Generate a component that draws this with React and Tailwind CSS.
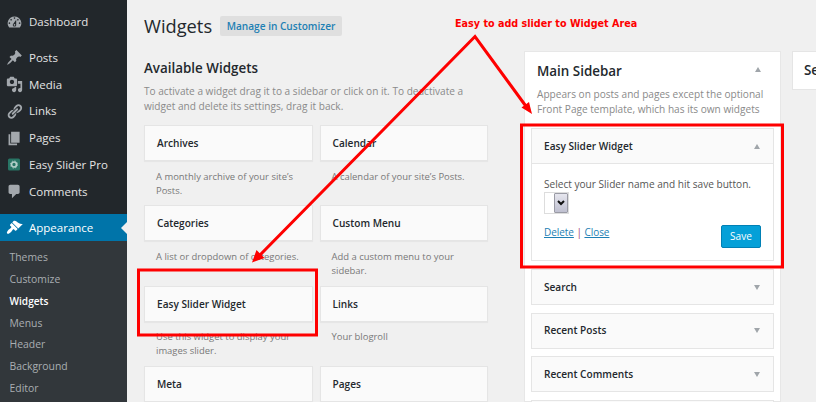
const icons = {
  dashboard:
    'M3.76 17h12.48A7.998 7.998 0 0 0 10 4a7.998 7.998 0 0 0-6.24 13zM10 5c.55 0 1 .45 1 1s-.45 1-1 1-1-.45-1-1 .45-1 1-1zM6 7c.55 0 1 .45 1 1s-.45 1-1 1-1-.45-1-1 .45-1 1-1zm8 0c.55 0 1 .45 1 1s-.45 1-1 1-1-.45-1-1 .45-1 1-1zm-5.37 5.55L12 8v6c0 1.1-.9 2-2 2s-2-.9-2-2c0-.57.24-1.08.63-1.45zM4 11c.55 0 1 .45 1 1s-.45 1-1 1-1-.45-1-1 .45-1 1-1zm12 0c.55 0 1 .45 1 1s-.45 1-1 1-1-.45-1-1 .45-1 1-1zm-5 3c0-.55-.45-1-1-1s-1 .45-1 1 .45 1 1 1 1-.45 1-1z',
  posts:
    'M10.44 3.02l1.82-1.82 6.36 6.35-1.83 1.82c-1.05-.68-2.48-.57-3.41.36l-.75.75c-.92.93-1.04 2.35-.35 3.41l-1.83 1.82-2.41-2.41-2.8 2.79c-.42.42-3.38 2.71-3.8 2.29s1.86-3.39 2.28-3.81l2.79-2.79L4.1 9.36l1.83-1.82c1.05.69 2.48.57 3.4-.36l.75-.75c.93-.92 1.05-2.35.36-3.41z',
  media:
    'M13 11V4c0-.55-.45-1-1-1h-1.67L9 1H5L3.67 3H2c-.55 0-1 .45-1 1v7c0 .55.45 1 1 1h10c.55 0 1-.45 1-1zM7 4.5c1.38 0 2.5 1.12 2.5 2.5S8.38 9.5 7 9.5 4.5 8.38 4.5 7 5.62 4.5 7 4.5zM14 6h5v10.5c0 1.38-1.12 2.5-2.5 2.5S14 17.88 14 16.5s1.12-2.5 2.5-2.5c.17 0 .34.02.5.05V9h-3V6zm-4 8.05V13h2v3.5c0 1.38-1.12 2.5-2.5 2.5S7 17.88 7 16.5 8.12 14 9.5 14c.17 0 .34.02.5.05z',
  links:
    'M17.74 2.76c1.68 1.69 1.68 4.41 0 6.1l-1.53 1.52c-1.12 1.12-2.7 1.47-4.14 1.09l2.62-2.61.76-.77.76-.76c.84-.84.84-2.2 0-3.04-.84-.85-2.2-.85-3.04 0l-.77.76-3.38 3.38c-.37-1.44-.02-3.02 1.1-4.14l1.52-1.53c1.69-1.68 4.42-1.68 6.1 0zM8.59 13.43l5.34-5.34c.42-.42.42-1.1 0-1.52-.44-.43-1.13-.39-1.53 0l-5.33 5.34c-.42.42-.42 1.1 0 1.52.44.43 1.13.39 1.52 0zm-.76 2.29l4.14-4.15c.38 1.44.03 3.02-1.09 4.14l-1.52 1.53c-1.69 1.68-4.41 1.68-6.1 0-1.68-1.68-1.68-4.42 0-6.1l1.53-1.52c1.12-1.12 2.7-1.47 4.14-1.1l-4.14 4.15c-.85.84-.85 2.2 0 3.05.84.84 2.2.84 3.04 0z',
  pages: 'M6 15V2h10v13H6zm-1 1h8v2H3V5h2v11z',
  comments:
    'M5 2h9c1.1 0 2 .9 2 2v7c0 1.1-.9 2-2 2h-2l-5 5v-5H5c-1.1 0-2-.9-2-2V4c0-1.1.9-2 2-2z',
  appearance:
    'M14.48 11.06L7.41 3.99l1.5-1.5c.5-.56 2.3-.47 3.51.32 1.21.8 1.43 1.28 2.91 2.1 1.18.64 2.45 1.26 4.45.85zm-.71.71L6.7 4.7 4.93 6.47c-.39.39-.39 1.02 0 1.41l1.06 1.06c.39.39.39 1.03 0 1.42-.6.6-1.43 1.11-2.21 1.69-.35.26-.7.53-1.01.84C1.43 14.23.4 16.08 1.4 17.07c.99 1 2.84-.03 4.18-1.36.31-.31.58-.66.85-1.02.57-.78 1.08-1.61 1.69-2.21.39-.39 1.02-.39 1.41 0l1.06 1.06c.39.39 1.02.39 1.41 0z',
};

function Icon({ name, className }) {
  if (name === 'slider') {
    return (
      <svg viewBox="0 0 17 17" className={`size-[17px] shrink-0 ${className}`}>
        <rect x="2" y="2.5" width="12" height="12" rx="1.5" fill="#287565" />
        <circle cx="8" cy="8.5" r="2.5" fill="none" stroke="#b3cfc9" strokeWidth="1.7" />
        <circle cx="8" cy="8.5" r="3.6" fill="none" stroke="#b3cfc9" strokeWidth="0.8" strokeDasharray="1.4 1.43" />
      </svg>
    );
  }
  return (
    <svg viewBox="0 0 20 20" fill="currentColor" className={`size-[17px] shrink-0 ${className}`}>
      <path fillRule="evenodd" d={icons[name]} />
    </svg>
  );
}

const menu = [
  ['posts', 'Posts'],
  ['media', 'Media'],
  ['links', 'Links'],
  ['pages', 'Pages'],
  ['slider', 'Easy Slider Pro'],
  ['comments', 'Comments'],
];

const submenu = ['Themes', 'Customize', 'Widgets', 'Menus', 'Header', 'Background', 'Editor'];

function MenuItem({ icon, label }) {
  return (
    <li className="flex h-[26.9px] items-center gap-[6px] pl-[6px]">
      <Icon name={icon} className="text-[#a3a8ad]" />
      <span className="text-[11.5px] text-[#e4e4e4]">{label}</span>
    </li>
  );
}

function AdminMenu() {
  return (
    <nav className="flex w-[127px] shrink-0 flex-col bg-[#22272b]">
      <ul className="pt-[8px]">
        <MenuItem icon="dashboard" label="Dashboard" />
      </ul>
      <ul className="pt-[9px]">
        {menu.map(([icon, label]) => (
          <MenuItem key={label} icon={icon} label={label} />
        ))}
      </ul>
      <div className="mt-[9px] flex h-[27px] shrink-0 items-center gap-[6px] bg-[#0074a9] pl-[6px] text-white">
        <Icon name="appearance" className="" />
        <span className="flex-1 text-[11.5px]">Appearance</span>
        <svg viewBox="0 0 6 12" className="h-[12px] w-[6px] shrink-0" fill="#f0f0f0">
          <path d="M6 0v12L0 6z" />
        </svg>
      </div>
      <ul className="flex-1 bg-[#32373b] pt-[6px] pl-[9.5px]">
        {submenu.map((label) => (
          <li
            key={label}
            className={`flex h-[21.75px] items-center ${
              label === 'Widgets' ? 'text-[10.1px] font-semibold text-white' : 'text-[10.4px] text-[#a9aeb2]'
            }`}
          >
            {label}
          </li>
        ))}
      </ul>
    </nav>
  );
}

const available = [
  ['Archives', ['A monthly archive of your site’s', 'Posts.']],
  ['Calendar', ['A calendar of your site’s Posts.']],
  ['Categories', ['A list or dropdown of categories.']],
  ['Custom Menu', ['Add a custom menu to your', 'sidebar.']],
  ['Easy Slider Widget', ['Use this widget to display your', 'images slider.']],
  ['Links', ['Your blogroll']],
  ['Meta', []],
  ['Pages', []],
];

function AvailableWidgets() {
  return (
    <section className="w-[344px] shrink-0">
      <header className="flex h-[22px] items-center gap-[8px]">
        <h1 className="w-[68px] text-[18.3px] leading-[22px] text-[#23282d]">Widgets</h1>
        <a className="flex h-[20px] w-[122px] items-center justify-center rounded-[2px] bg-[#dfdfdf] pt-px text-[10.1px] font-semibold text-[#1d7fb4]">
          Manage in Customizer
        </a>
      </header>
      <h2 className="mt-[21px] text-[13.4px] leading-[20px] font-semibold text-[#23282d]">Available Widgets</h2>
      <p className="mt-[5.5px] text-[10.1px] leading-[15px] whitespace-nowrap text-[#8a8a8a]">
        To activate a widget drag it to a sidebar or click on it. To deactivate a
        <br />
        widget and delete its settings, drag it back.
      </p>
      <div className="mt-[11.5px] grid grid-cols-2 gap-x-[7px]">
        {available.map(([title, lines]) => (
          <article key={title} className="h-[80.3px]">
            <h3 className="flex h-[36px] items-center border border-[#e5e5e5] bg-[#fafafa] pt-[1.4px] pl-[12px] text-[10.1px] font-semibold text-[#23282d] shadow-[0_1px_1px_rgba(0,0,0,0.04)]">
              {title}
            </h3>
            <p className="pt-[8.6px] pl-[12px] text-[9.45px] leading-[14.3px] whitespace-nowrap text-[#787878]">
              {lines.map((line) => (
                <span key={line} className="block">
                  {line}
                </span>
              ))}
            </p>
          </article>
        ))}
      </div>
    </section>
  );
}

function Toggle({ open }) {
  return (
    <svg viewBox="0 0 6 5" className="h-[5px] w-[6px] shrink-0" fill="#a0a5aa">
      <path d={open ? 'M0 5L3 0l3 5z' : 'M0 0h6L3 5z'} />
    </svg>
  );
}

function WidgetBar({ title }) {
  return (
    <div className="flex h-[36px] shrink-0 items-center justify-between border border-[#e5e5e5] bg-[#fafafa] pt-[0.6px] pr-[13px] pl-[12px]">
      <h3 className="text-[10.1px] font-semibold text-[#23282d]">{title}</h3>
      <Toggle />
    </div>
  );
}

function MainSidebar() {
  return (
    <section className="mt-[51px] flex w-[257px] shrink-0 flex-col border border-[#e7e7e7] bg-white px-[6px]">
      <header className="flex h-[38px] shrink-0 items-center justify-between pr-[13px] pl-[6px]">
        <h2 className="text-[13.4px] font-semibold text-[#23282d]">Main Sidebar</h2>
        <span className="pb-[3px]">
          <Toggle open />
        </span>
      </header>
      <p className="-mt-[3px] h-[41px] shrink-0 pl-[6px] text-[10.1px] leading-[15px] whitespace-nowrap text-[#8a8a8a]">
        Appears on posts and pages except the optional
        <br />
        Front Page template, which has its own widgets
      </p>
      <article className="h-[133px] shrink-0 border border-[#e5e5e5]">
        <div className="flex h-[35px] items-center justify-between border-b border-[#e5e5e5] bg-[#fafafa] pt-px pr-[13px] pl-[12px]">
          <h3 className="text-[10.1px] font-semibold text-[#23282d]">Easy Slider Widget</h3>
          <Toggle open />
        </div>
        <div className="pt-[12px] pr-[12px] pl-[12px]">
          <p className="text-[10.1px] leading-[16px] whitespace-nowrap text-[#555]">
            Select your Slider name and hit save button.
          </p>
          <div className="flex h-[22px] w-[25px] border border-[#ddd] bg-white">
            <span className="flex-1" />
            <span className="flex w-[14px] items-center justify-center rounded-[1px] border border-[#9a9ba5] bg-linear-to-b from-[#e6e6ee] to-[#bfc0d0]">
              <svg viewBox="0 0 8 6" className="h-[6px] w-[8px]" fill="none" stroke="#111" strokeWidth="2">
                <path d="M1 1l3 3 3-3" />
              </svg>
            </span>
          </div>
          <div className="mt-[10px] flex items-start justify-between">
            <p className="text-[10px] leading-[16px] tracking-[-0.05px] text-[#a0406a]">
              <a className="text-[#1d7fb4] underline">Delete</a> | <a className="text-[#1d7fb4] underline">Close</a>
            </p>
            <button className="mt-px flex h-[23px] w-[40px] items-center justify-center rounded-[2px] border border-[#0080b5] bg-[#05a0d8] text-[10.1px] text-white">
              Save
            </button>
          </div>
        </div>
      </article>
      <div className="mt-[8px] flex flex-col gap-[7.5px]">
        <WidgetBar title="Search" />
        <WidgetBar title="Recent Posts" />
        <WidgetBar title="Recent Comments" />
        <WidgetBar title="" />
      </div>
    </section>
  );
}

function Annotations() {
  return (
    <>
      <p className="absolute top-[16px] left-[455px] text-[10.7px] leading-[16px] font-bold whitespace-nowrap text-[#fe0000] [font-family:'DejaVu_Sans_Condensed','DejaVu_Sans',sans-serif] [font-stretch:75%]">
        Easy to add slider to Widget Area
      </p>
      <svg viewBox="0 0 816 402" className="absolute inset-0 h-[402px] w-[816px]" fill="none" stroke="#fe0000">
        <path d="M258 257L475 36.500L528 109" strokeWidth="3" />
        <path d="M252 262.500l4.500-12.500 8 8z M532 114l-10.500-6.500 7.500-5.500z" fill="#fe0000" stroke="none" />
        <rect x="138.500" y="270" width="178" height="65" strokeWidth="3" />
        <rect x="521.500" y="125" width="261" height="142" strokeWidth="3" />
      </svg>
    </>
  );
}

export default function App() {
  return (
    <div className="relative flex h-[402px] w-[816px] overflow-hidden bg-[#f0f0f0] [font-family:'Open_Sans','Noto_Sans',sans-serif]">
      <AdminMenu />
      <main className="flex min-w-0 flex-1 pl-[17px]">
        <div className="pt-[15px]">
          <AvailableWidgets />
        </div>
        <div className="flex min-w-0 flex-1 gap-[11px] pl-[36px]">
          <MainSidebar />
          <section className="mt-[51px] flex h-[39px] min-w-0 flex-1 items-center border border-r-0 border-[#e5e5e5] bg-white pl-[11px]">
            <h2 className="text-[13.4px] font-semibold text-[#23282d]">Se</h2>
          </section>
        </div>
      </main>
      <Annotations />
    </div>
  );
}
